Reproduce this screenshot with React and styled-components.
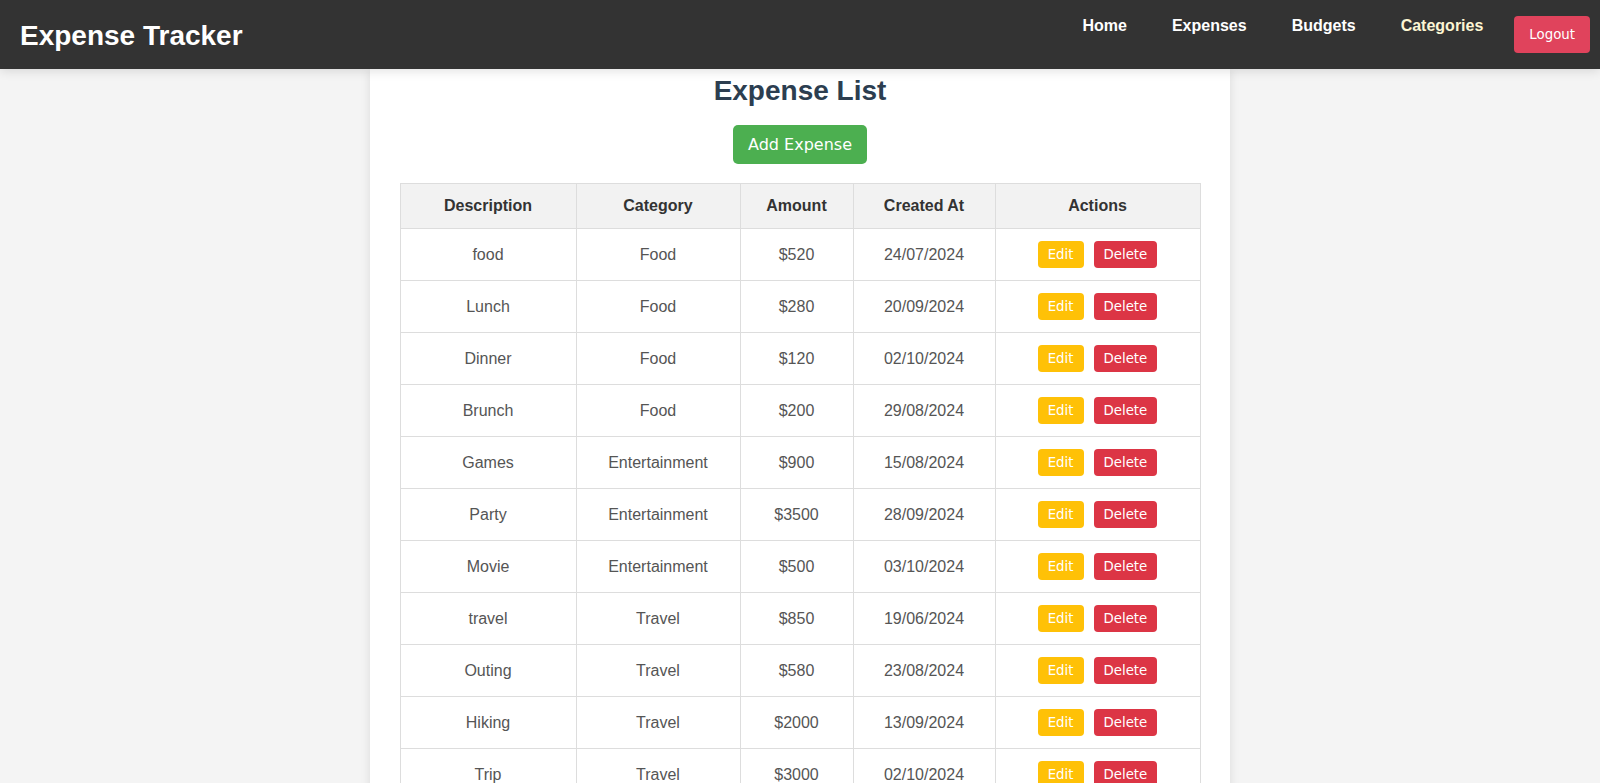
import React from "react";
import styled, { createGlobalStyle } from "styled-components";

const GlobalStyle = createGlobalStyle`
  html, body {
    margin: 0;
    padding: 0;
    background: #f4f4f4;
    font-family: "Liberation Sans", Arial, sans-serif;
  }
  * { box-sizing: border-box; }
`;

const Page = styled.div`
  min-height: 100vh;
  display: flex;
  flex-direction: column;
`;

const Navbar = styled.header`
  position: relative;
  z-index: 2;
  height: 69px;
  background: #333;
  color: #fff;
  display: flex;
  align-items: center;
  padding: 0 10px 0 20px;
  box-shadow: 0 2px 10px rgba(0, 0, 0, 0.12);
`;

const Brand = styled.h1`
  margin: 0;
  padding-top: 3px;
  font-size: 28px;
  font-weight: 700;
  line-height: 32px;
  color: #fff;
`;

const NavLinks = styled.nav`
  margin-left: auto;
  align-self: flex-start;
  padding-top: 16px;
  display: flex;
  gap: 45px;
`;

const NavLink = styled.a`
  font-size: 16px;
  font-weight: 700;
  line-height: 19px;
  color: ${(p) => (p.$active ? "#fdf6d3" : "#fff")};
  text-decoration: none;
  cursor: pointer;
`;

const LogoutButton = styled.button`
  margin-left: 31px;
  align-self: flex-start;
  margin-top: 16px;
  background: #e0435c;
  color: #fff;
  border: none;
  border-radius: 4px;
  padding: 10px 15px;
  font-family: "DejaVu Sans", sans-serif;
  font-size: 13.333px;
  line-height: 17px;
  cursor: pointer;
`;

const Main = styled.main`
  display: flex;
  justify-content: center;
`;

const Card = styled.section`
  width: 860px;
  background: #fff;
  padding: 6px 30px 30px;
  box-shadow: 0 0 10px rgba(0, 0, 0, 0.1);
  display: flex;
  flex-direction: column;
  align-items: center;
`;

const Title = styled.h2`
  margin: 0;
  font-size: 28px;
  line-height: 32px;
  font-weight: 700;
  color: #2c3e50;
  text-align: center;
`;

const AddButton = styled.button`
  margin: 18px 0 19px;
  background: #4caf50;
  color: #fff;
  border: none;
  border-radius: 5px;
  padding: 10px 15px;
  font-family: "DejaVu Sans", sans-serif;
  font-size: 16px;
  line-height: 19px;
  cursor: pointer;
`;

const Table = styled.table`
  width: 800px;
  border-collapse: collapse;
  table-layout: fixed;
`;

const Th = styled.th`
  border: 1px solid #ddd;
  background: #f2f2f2;
  color: #333;
  font-size: 16px;
  font-weight: 700;
  padding: 12px;
  line-height: 18px;
  height: 45px;
  text-align: center;
`;

const Td = styled.td`
  border: 1px solid #ddd;
  color: #555;
  font-size: 16px;
  padding: 12px;
  line-height: 18px;
  height: 52px;
  text-align: center;
`;

const Actions = styled.div`
  display: flex;
  justify-content: center;
  gap: 10px;
`;

const ActionButton = styled.button`
  background: ${(p) => (p.$variant === "edit" ? "#ffc107" : "#dc3545")};
  color: #fff;
  border: none;
  border-radius: 4px;
  padding: 5px 10px;
  font-family: "DejaVu Sans", sans-serif;
  font-size: 13.333px;
  line-height: 17px;
  cursor: pointer;
`;

const expenses = [
  ["food", "Food", "$520", "24/07/2024"],
  ["Lunch", "Food", "$280", "20/09/2024"],
  ["Dinner", "Food", "$120", "02/10/2024"],
  ["Brunch", "Food", "$200", "29/08/2024"],
  ["Games", "Entertainment", "$900", "15/08/2024"],
  ["Party", "Entertainment", "$3500", "28/09/2024"],
  ["Movie", "Entertainment", "$500", "03/10/2024"],
  ["travel", "Travel", "$850", "19/06/2024"],
  ["Outing", "Travel", "$580", "23/08/2024"],
  ["Hiking", "Travel", "$2000", "13/09/2024"],
  ["Trip", "Travel", "$3000", "02/10/2024"],
];

const colWidths = [176, 164, 113, 142, 205];

export default function App() {
  return (
    <Page>
      <GlobalStyle />
      <Navbar>
        <Brand>Expense Tracker</Brand>
        <NavLinks>
          <NavLink>Home</NavLink>
          <NavLink>Expenses</NavLink>
          <NavLink>Budgets</NavLink>
          <NavLink $active>Categories</NavLink>
        </NavLinks>
        <LogoutButton>Logout</LogoutButton>
      </Navbar>
      <Main>
        <Card>
          <Title>Expense List</Title>
          <AddButton>Add Expense</AddButton>
          <Table>
            <colgroup>
              {colWidths.map((w, i) => (
                <col key={i} style={{ width: w }} />
              ))}
            </colgroup>
            <thead>
              <tr>
                <Th>Description</Th>
                <Th>Category</Th>
                <Th>Amount</Th>
                <Th>Created At</Th>
                <Th>Actions</Th>
              </tr>
            </thead>
            <tbody>
              {expenses.map(([d, c, a, t]) => (
                <tr key={d}>
                  <Td>{d}</Td>
                  <Td>{c}</Td>
                  <Td>{a}</Td>
                  <Td>{t}</Td>
                  <Td>
                    <Actions>
                      <ActionButton $variant="edit">Edit</ActionButton>
                      <ActionButton $variant="delete">Delete</ActionButton>
                    </Actions>
                  </Td>
                </tr>
              ))}
            </tbody>
          </Table>
        </Card>
      </Main>
    </Page>
  );
}
